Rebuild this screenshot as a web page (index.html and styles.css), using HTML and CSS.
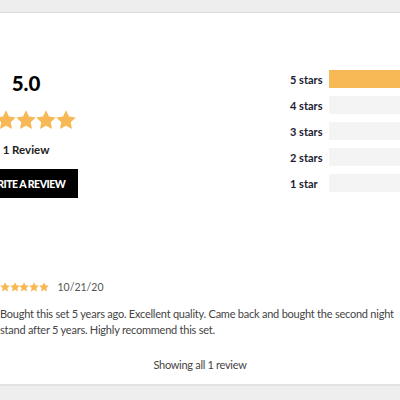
FILE: index.html
```html
<!DOCTYPE html>
<html>
<head>
<meta charset="utf-8">
<link rel="stylesheet" href="styles.css">
</head>
<body>
<div class="band-top"></div>
<main class="panel">
  <section class="summary">
    <div class="overall">
      <div class="score">5.0</div>
      <div class="stars big">
        <svg viewBox="1.5 1.5 21 21"><path d="M12 1.8l3.1 6.6 7.1.9-5.2 5 1.3 7.1L12 18l-6.3 3.4L7 14.3l-5.2-5 7.1-.9z"/></svg>
        <svg viewBox="1.5 1.5 21 21"><path d="M12 1.8l3.1 6.6 7.1.9-5.2 5 1.3 7.1L12 18l-6.3 3.4L7 14.3l-5.2-5 7.1-.9z"/></svg>
        <svg viewBox="1.5 1.5 21 21"><path d="M12 1.8l3.1 6.6 7.1.9-5.2 5 1.3 7.1L12 18l-6.3 3.4L7 14.3l-5.2-5 7.1-.9z"/></svg>
        <svg viewBox="1.5 1.5 21 21"><path d="M12 1.8l3.1 6.6 7.1.9-5.2 5 1.3 7.1L12 18l-6.3 3.4L7 14.3l-5.2-5 7.1-.9z"/></svg>
        <svg viewBox="1.5 1.5 21 21"><path d="M12 1.8l3.1 6.6 7.1.9-5.2 5 1.3 7.1L12 18l-6.3 3.4L7 14.3l-5.2-5 7.1-.9z"/></svg>
      </div>
      <div class="count">1 Review</div>
      <button class="write">Write a review</button>
    </div>
    <div class="bars">
      <div class="bar-row"><span class="label">5 stars</span><span class="track"><span class="fill" style="width:100%"></span></span></div>
      <div class="bar-row"><span class="label">4 stars</span><span class="track"></span></div>
      <div class="bar-row"><span class="label">3 stars</span><span class="track"></span></div>
      <div class="bar-row"><span class="label">2 stars</span><span class="track"></span></div>
      <div class="bar-row"><span class="label">1 star</span><span class="track"></span></div>
    </div>
  </section>
  <section class="review">
    <div class="meta">
      <span class="stars small">
        <svg viewBox="1.5 1.5 21 21"><path d="M12 1.8l3.1 6.6 7.1.9-5.2 5 1.3 7.1L12 18l-6.3 3.4L7 14.3l-5.2-5 7.1-.9z"/></svg>
        <svg viewBox="1.5 1.5 21 21"><path d="M12 1.8l3.1 6.6 7.1.9-5.2 5 1.3 7.1L12 18l-6.3 3.4L7 14.3l-5.2-5 7.1-.9z"/></svg>
        <svg viewBox="1.5 1.5 21 21"><path d="M12 1.8l3.1 6.6 7.1.9-5.2 5 1.3 7.1L12 18l-6.3 3.4L7 14.3l-5.2-5 7.1-.9z"/></svg>
        <svg viewBox="1.5 1.5 21 21"><path d="M12 1.8l3.1 6.6 7.1.9-5.2 5 1.3 7.1L12 18l-6.3 3.4L7 14.3l-5.2-5 7.1-.9z"/></svg>
        <svg viewBox="1.5 1.5 21 21"><path d="M12 1.8l3.1 6.6 7.1.9-5.2 5 1.3 7.1L12 18l-6.3 3.4L7 14.3l-5.2-5 7.1-.9z"/></svg>
      </span>
      <span class="date">10/21/20</span>
    </div>
    <p class="text">Bought this set 5 years ago. Excellent quality. Came back and bought the second night stand after 5 years. Highly recommend this set.</p>
  </section>
  <p class="showing">Showing all 1 review</p>
</main>
<div class="band-bottom"></div>
</body>
</html>
```

FILE: styles.css
```css
html, body {
  margin: 0;
  padding: 0;
}
body {
  width: 400px;
  height: 400px;
  overflow: hidden;
  background: #eeeeee;
  font-family: Lato, "Liberation Sans", sans-serif;
  color: #333;
}
.band-top {
  height: 12px;
  background: #eeeeee;
  border-bottom: 1px solid #dcdcdc;
}
.panel {
  background: #ffffff;
  height: 373px;
  box-sizing: border-box;
  border-bottom: 2px solid #e2e2e2;
  padding-top: 57px;
}
.summary {
  display: flex;
  align-items: flex-start;
  margin-left: -54px;
}
.overall {
  flex: 0 0 160px;
  width: 160px;
  display: flex;
  flex-direction: column;
  align-items: center;
}
.score {
  font-size: 20.5px;
  line-height: 26px;
  font-weight: 900;
  color: #000;
}
.stars {
  display: flex;
}
.stars svg {
  fill: #f7b955;
  display: block;
  flex: 0 0 auto;
}
.stars.big {
  margin-top: 14px;
}
.stars.big svg {
  width: 20px;
  height: 20px;
}
.count {
  margin-top: 12px;
  font-size: 11.5px;
  line-height: 16px;
  font-weight: 700;
  color: #222;
}
.write {
  margin-top: 11px;
  width: 104px;
  height: 29px;
  border: 0;
  background: #000;
  color: #fff;
  font-family: Lato, "Liberation Sans", sans-serif;
  font-weight: 900;
  font-size: 10.5px;
  letter-spacing: -0.5px;
  text-transform: uppercase;
  padding: 0;
}
.bars {
  flex: 0 0 auto;
  margin-left: 184px;
  display: flex;
  flex-direction: column;
  gap: 8px;
}
.bar-row {
  display: flex;
  align-items: center;
  height: 18px;
}
.label {
  flex: 0 0 39px;
  font-size: 11px;
  font-weight: 700;
  color: #1c1c30;
}
.track {
  flex: 0 0 200px;
  height: 18px;
  background: #f4f4f4;
  display: block;
}
.fill {
  display: block;
  height: 100%;
  background: #f7b955;
}
.review {
  margin-top: 82px;
}
.meta {
  display: flex;
  align-items: center;
  gap: 9px;
  height: 14px;
}
.stars.small svg {
  width: 10px;
  height: 10px;
  margin-right: -0.3px;
}
.date {
  font-size: 10.5px;
  color: #555;
}
.text {
  margin: 12px 0 0;
  width: 405px;
  font-size: 11px;
  letter-spacing: -0.23px;
  line-height: 16px;
  color: #444;
}
.showing {
  margin: 19px 0 0;
  text-align: center;
  font-size: 11px;
  letter-spacing: -0.3px;
  line-height: 16px;
  color: #444;
}
.band-bottom {
  height: 15px;
  background: #eeeeee;
}
```
